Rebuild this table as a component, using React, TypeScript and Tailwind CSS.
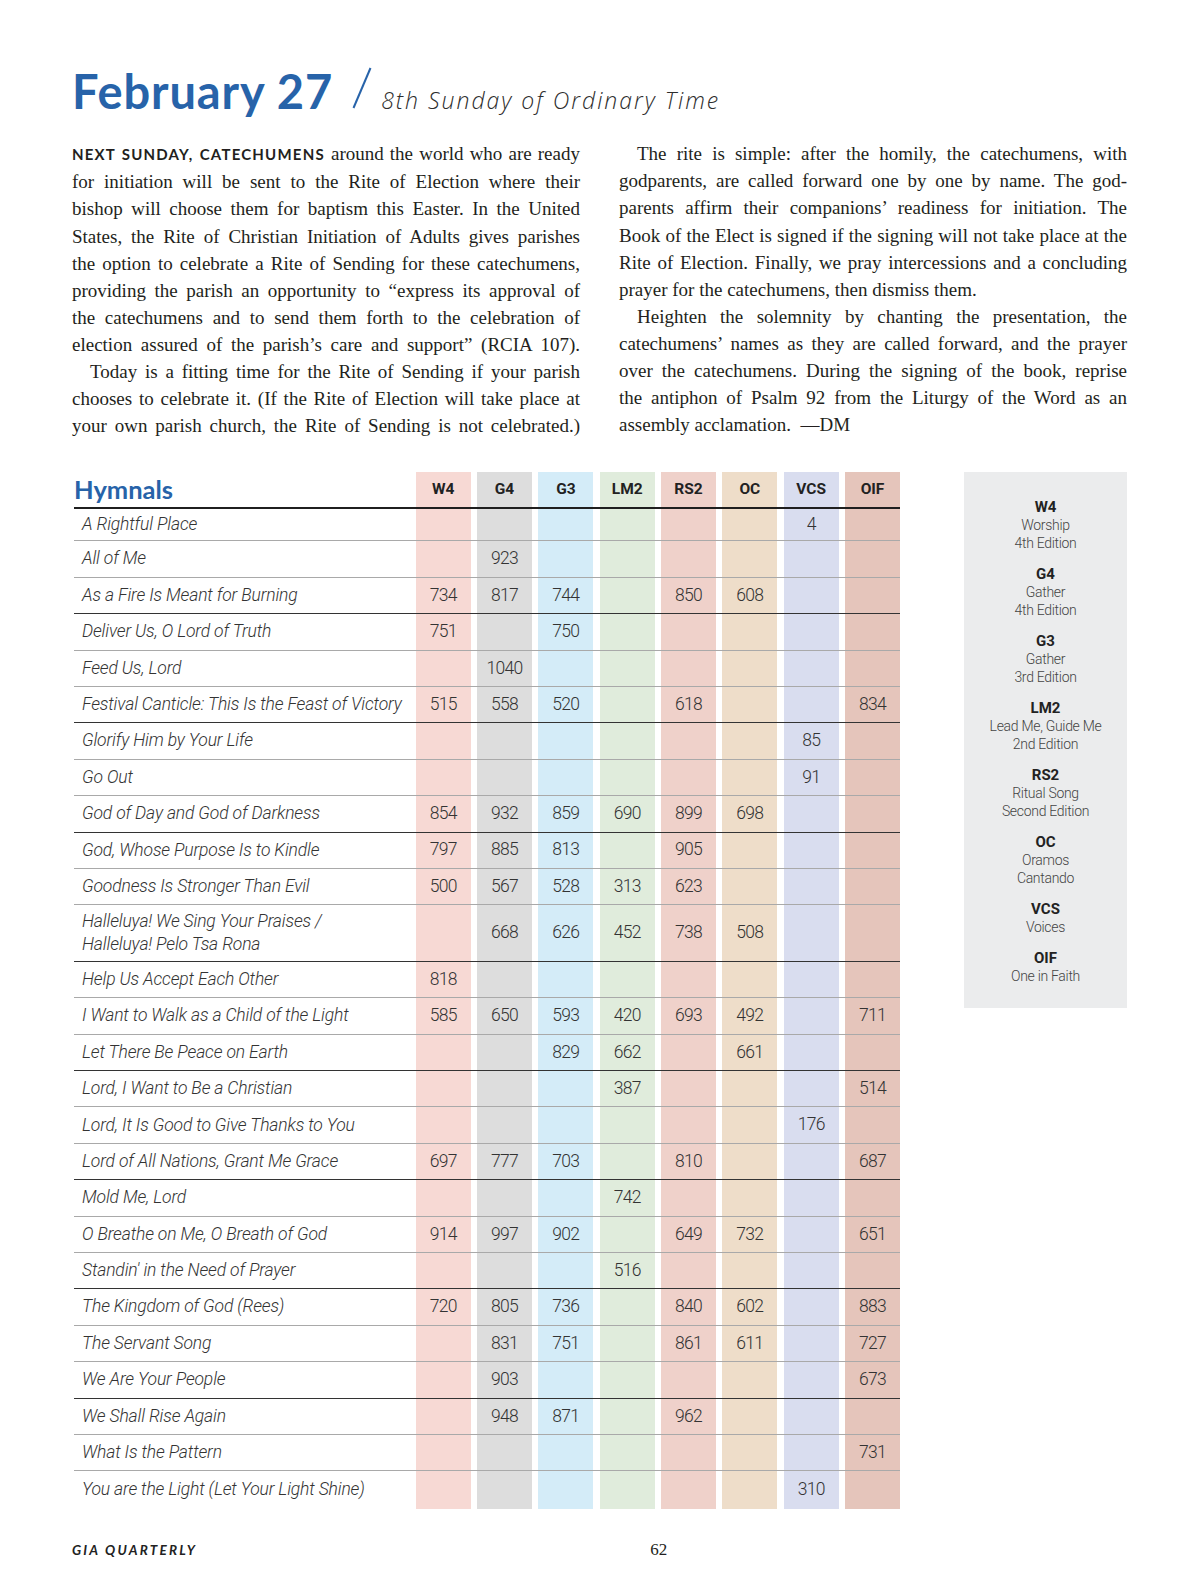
const leftLines: { t: string; lead?: string; indent?: boolean; last?: boolean }[] = [
  { lead: "NEXT SUNDAY, CATECHUMENS", t: " around the world who are ready" },
  { t: "for initiation will be sent to the Rite of Election where their" },
  { t: "bishop will choose them for baptism this Easter. In the United" },
  { t: "States, the Rite of Christian Initiation of Adults gives parishes" },
  { t: "the option to celebrate a Rite of Sending for these catechumens," },
  { t: "providing the parish an opportunity to \u201Cexpress its approval of" },
  { t: "the catechumens and to send them forth to the celebration of" },
  { t: "election assured of the parish\u2019s care and support\u201D (RCIA 107)." },
  { t: "Today is a fitting time for the Rite of Sending if your parish", indent: true },
  { t: "chooses to celebrate it. (If the Rite of Election will take place at" },
  { t: "your own parish church, the Rite of Sending is not celebrated.)" },
];

const rightLines: { t: string; lead?: string; indent?: boolean; last?: boolean }[] = [
  { t: "The rite is simple: after the homily, the catechumens, with", indent: true },
  { t: "godparents, are called forward one by one by name. The god-" },
  { t: "parents affirm their companions\u2019 readiness for initiation. The" },
  { t: "Book of the Elect is signed if the signing will not take place at the" },
  { t: "Rite of Election. Finally, we pray intercessions and a concluding" },
  { t: "prayer for the catechumens, then dismiss them.", last: true },
  { t: "Heighten the solemnity by chanting the presentation, the", indent: true },
  { t: "catechumens\u2019 names as they are called forward, and the prayer" },
  { t: "over the catechumens. During the signing of the book, reprise" },
  { t: "the antiphon of Psalm 92 from the Liturgy of the Word as an" },
  { t: "assembly acclamation.\u2002\u2014DM", last: true },
];

const cols = ["W4", "G4", "G3", "LM2", "RS2", "OC", "VCS", "OIF"];
const colBg = [
  "bg-[#f7d9d4]",
  "bg-[#dddddd]",
  "bg-[#d4ecf8]",
  "bg-[#e0ecdc]",
  "bg-[#efd1ca]",
  "bg-[#eeddc9]",
  "bg-[#d9ddef]",
  "bg-[#e5c5bb]",
];

const hymns: [string[], string[]][] = [
  [["A Rightful Place"], ["", "", "", "", "", "", "4", ""]],
  [["All of Me"], ["", "923", "", "", "", "", "", ""]],
  [["As a Fire Is Meant for Burning"], ["734", "817", "744", "", "850", "608", "", ""]],
  [["Deliver Us, O Lord of Truth"], ["751", "", "750", "", "", "", "", ""]],
  [["Feed Us, Lord"], ["", "1040", "", "", "", "", "", ""]],
  [["Festival Canticle: This Is the Feast of Victory"], ["515", "558", "520", "", "618", "", "", "834"]],
  [["Glorify Him by Your Life"], ["", "", "", "", "", "", "85", ""]],
  [["Go Out"], ["", "", "", "", "", "", "91", ""]],
  [["God of Day and God of Darkness"], ["854", "932", "859", "690", "899", "698", "", ""]],
  [["God, Whose Purpose Is to Kindle"], ["797", "885", "813", "", "905", "", "", ""]],
  [["Goodness Is Stronger Than Evil"], ["500", "567", "528", "313", "623", "", "", ""]],
  [["Halleluya! We Sing Your Praises /", "Halleluya! Pelo Tsa Rona"], ["", "668", "626", "452", "738", "508", "", ""]],
  [["Help Us Accept Each Other"], ["818", "", "", "", "", "", "", ""]],
  [["I Want to Walk as a Child of the Light"], ["585", "650", "593", "420", "693", "492", "", "711"]],
  [["Let There Be Peace on Earth"], ["", "", "829", "662", "", "661", "", ""]],
  [["Lord, I Want to Be a Christian"], ["", "", "", "387", "", "", "", "514"]],
  [["Lord, It Is Good to Give Thanks to You"], ["", "", "", "", "", "", "176", ""]],
  [["Lord of All Nations, Grant Me Grace"], ["697", "777", "703", "", "810", "", "", "687"]],
  [["Mold Me, Lord"], ["", "", "", "742", "", "", "", ""]],
  [["O Breathe on Me, O Breath of God"], ["914", "997", "902", "", "649", "732", "", "651"]],
  [["Standin' in the Need of Prayer"], ["", "", "", "516", "", "", "", ""]],
  [["The Kingdom of God (Rees)"], ["720", "805", "736", "", "840", "602", "", "883"]],
  [["The Servant Song"], ["", "831", "751", "", "861", "611", "", "727"]],
  [["We Are Your People"], ["", "903", "", "", "", "", "", "673"]],
  [["We Shall Rise Again"], ["", "948", "871", "", "962", "", "", ""]],
  [["What Is the Pattern"], ["", "", "", "", "", "", "", "731"]],
  [["You are the Light (Let Your Light Shine)"], ["", "", "", "", "", "", "310", ""]],
];

const legend: [string, string[]][] = [
  ["W4", ["Worship", "4th Edition"]],
  ["G4", ["Gather", "4th Edition"]],
  ["G3", ["Gather", "3rd Edition"]],
  ["LM2", ["Lead Me, Guide Me", "2nd Edition"]],
  ["RS2", ["Ritual Song", "Second Edition"]],
  ["OC", ["Oramos", "Cantando"]],
  ["VCS", ["Voices"]],
  ["OIF", ["One in Faith"]],
];

function TextColumn({ lines }: { lines: typeof leftLines }) {
  return (
    <div className="font-['Liberation_Serif',serif] text-[19px] leading-[27.1px] text-[#231f20]">
      {lines.map((l, i) => (
        <div
          key={i}
          className={`${l.last ? "text-left" : "text-justify [text-align-last:justify]"} ${
            l.indent ? "pl-[18px]" : ""
          }`}
        >
          {l.lead && (
            <span className="font-['Lato',sans-serif] font-bold text-[15px] tracking-[1.2px] text-[#231f20]">
              {l.lead}
            </span>
          )}
          {l.t}
        </div>
      ))}
    </div>
  );
}

function rowClass(i: number, tall: boolean) {
  const last = i === hymns.length - 1;
  let h = "h-[36.4px]";
  if (i === 0) h = "h-[32.5px]";
  if (tall) h = "h-[56.6px]";
  if (last) h = "h-[37.4px]";
  const border = last
    ? ""
    : i % 3 === 2
    ? "border-b-[1.5px] border-[#333]"
    : "border-b border-[#a9a9a9]";
  return `${h} ${border}`;
}

function HymnTable() {
  return (
    <div className="w-[826px] ml-[2px] font-['Roboto',sans-serif]">
      <div className="grid grid-cols-[1fr_repeat(8,55px)] gap-x-[6.33px] h-[37px] border-b-[2.5px] border-[#1f1f1f]">
        <div className="flex items-center font-['Lato',sans-serif] font-bold text-[25.5px] leading-none text-[#2763a9]">
          Hymnals
        </div>
        {cols.map((c, j) => (
          <div
            key={c}
            className={`${colBg[j]} flex items-center justify-center font-bold text-[15.5px] leading-none text-[#222]`}
          >
            {c}
          </div>
        ))}
      </div>
      {hymns.map(([title, nums], i) => (
        <div
          key={i}
          className={`grid grid-cols-[1fr_repeat(8,55px)] gap-x-[6.33px] ${rowClass(i, title.length > 1)}`}
        >
          <div className="flex items-center pl-[8px] italic font-light text-[17.5px] tracking-[-0.15px] leading-[23.3px] text-[#333]">
            <div>
              {title.map((t, k) => (
                <div key={k}>{t}</div>
              ))}
            </div>
          </div>
          {nums.map((n, j) => (
            <div
              key={j}
              className={`${colBg[j]} flex items-center justify-center font-light text-[17.5px] leading-none tracking-[-0.7px] text-[#333]`}
            >
              {n}
            </div>
          ))}
        </div>
      ))}
    </div>
  );
}

function Legend() {
  return (
    <div className="w-[163px] h-[536px] bg-[#ebeced] pt-[26px] flex flex-col items-center gap-[13px] font-['Roboto',sans-serif] text-center leading-[18px]">
      {legend.map(([code, desc]) => (
        <div key={code}>
          <div className="font-bold text-[15px] text-[#222]">{code}</div>
          {desc.map((d) => (
            <div key={d} className="font-light text-[14px] tracking-[-0.3px] text-[#444]">
              {d}
            </div>
          ))}
        </div>
      ))}
    </div>
  );
}

export default function App() {
  return (
    <div className="w-[1200px] h-[1582px] bg-white pl-[72px] pr-[73px] pt-[67px]">
      <div className="flex items-baseline h-[46px]">
        <h1 className="font-['Lato',sans-serif] font-bold text-[47px] tracking-[0.9px] leading-none text-[#2763a9]">
          February 27
        </h1>
        <svg width="20" height="42" viewBox="0 0 20 42" className="ml-[19px] -mb-[5px]">
          <line x1="1.5" y1="41" x2="18.5" y2="1" stroke="#2763a9" strokeWidth="2" />
        </svg>
        <span className="ml-[9px] font-['Open_Sans',sans-serif] font-light italic text-[23px] leading-none tracking-[2px] text-[#2d2d2d]">
          8th Sunday of Ordinary Time
        </span>
      </div>

      <div className="grid grid-cols-2 gap-x-[39px] mt-[27.3px]">
        <TextColumn lines={leftLines} />
        <TextColumn lines={rightLines} />
      </div>

      <div className="flex items-start justify-between mt-[32.6px]">
        <HymnTable />
        <Legend />
      </div>

      <div className="flex items-center h-[16px] mt-[33px]">
        <span className="font-['Lato',sans-serif] font-bold italic text-[13.5px] tracking-[2.2px] text-[#222]">
          GIA QUARTERLY
        </span>
        <span className="ml-[453px] font-['Liberation_Serif',serif] text-[17px] text-[#231f20]">62</span>
      </div>
    </div>
  );
}
